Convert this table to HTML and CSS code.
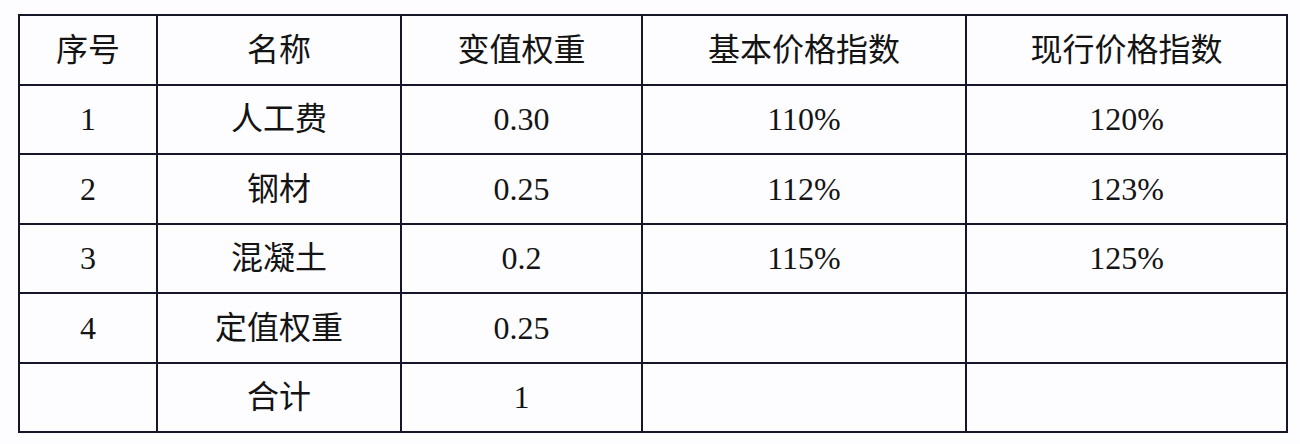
FILE: index.html
```html
<!DOCTYPE html>
<html lang="zh">
<head>
<meta charset="utf-8">
<link rel="stylesheet" href="styles.css">
</head>
<body>
<table class="grid">
  <colgroup>
    <col class="c1"><col class="c2"><col class="c3"><col class="c4"><col class="c5">
  </colgroup>
  <tr><td>序号</td><td>名称</td><td>变值权重</td><td>基本价格指数</td><td>现行价格指数</td></tr>
  <tr><td>1</td><td>人工费</td><td>0.30</td><td>110%</td><td>120%</td></tr>
  <tr><td>2</td><td>钢材</td><td>0.25</td><td>112%</td><td>123%</td></tr>
  <tr><td>3</td><td>混凝土</td><td>0.2</td><td>115%</td><td>125%</td></tr>
  <tr><td>4</td><td>定值权重</td><td>0.25</td><td></td><td></td></tr>
  <tr><td></td><td>合计</td><td>1</td><td></td><td></td></tr>
</table>
</body>
</html>
```
FILE: styles.css
```css
html, body {
  margin: 0;
  padding: 0;
  background: #fdfdff;
}
body {
  padding: 14px 0 0 18px;
}
.grid {
  border-collapse: collapse;
  table-layout: fixed;
  width: 1268px;
  font-family: "Liberation Serif", "Noto Sans CJK SC", serif;
  font-size: 32px;
  color: #141414;
}
.c1 { width: 138px; }
.c2 { width: 244px; }
.c3 { width: 241px; }
.c4 { width: 324px; }
.c5 { width: 321px; }
.grid td {
  border: 2px solid #16162a;
  height: 67.5px;
  padding: 0;
  text-align: center;
  vertical-align: middle;
  line-height: 1;
}
```
